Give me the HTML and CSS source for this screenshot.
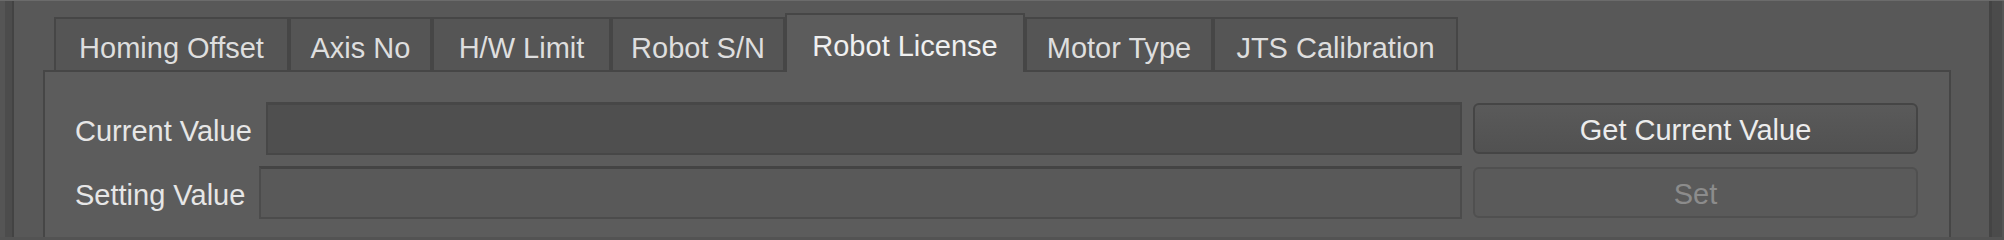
FILE: index.html
```html
<!DOCTYPE html>
<html>
<head>
<meta charset="utf-8">
<link rel="stylesheet" href="styles.css">
</head>
<body>
<div class="frame">
  <div class="side-left"></div>
  <div class="main">
    <div class="tabs">
      <div class="tab t-homing">Homing Offset</div>
      <div class="tab t-axis">Axis No</div>
      <div class="tab t-hw">H/W Limit</div>
      <div class="tab t-sn">Robot S/N</div>
      <div class="tab tab-active t-license">Robot License</div>
      <div class="tab t-motor">Motor Type</div>
      <div class="tab t-jts">JTS Calibration</div>
    </div>
    <div class="panel">
      <div class="row">
        <div class="label">Current Value</div>
        <div class="input input-readonly"></div>
        <div class="btn">Get Current Value</div>
      </div>
      <div class="row">
        <div class="label">Setting Value</div>
        <div class="input input-edit"></div>
        <div class="btn btn-disabled">Set</div>
      </div>
    </div>
  </div>
  <div class="side-right"></div>
</div>
<div class="bottom-strip"></div>
</body>
</html>
```
FILE: styles.css
```css
* { box-sizing: border-box; }
html, body { margin: 0; padding: 0; }
body {
  width: 2004px;
  height: 240px;
  overflow: hidden;
  background: #585858;
  border-top: 1px solid #6b6b6b;
  font-family: "Liberation Sans", Arial, sans-serif;
  font-size: 29px;
  color: #e4e4e4;
}
.frame {
  display: flex;
  height: 236px;
}
.side-left {
  width: 14px;
  flex: none;
  background: #4c4c4c;
  border-left: 5px solid #555555;
  border-right: 2px solid #434343;
}
.side-right {
  width: 15px;
  flex: none;
  background: #4b4b4b;
  border-left: 3px solid #444444;
  border-right: 2px solid #555555;
}
.main {
  flex: 1;
  display: flex;
  flex-direction: column;
  padding: 12px 38px 0 29px;
}
.tabs {
  display: flex;
  align-items: flex-end;
  height: 57px;
  padding-left: 11px;
}
.tab {
  height: 53px;
  background: #555555;
  border: 2px solid #464646;
  border-bottom: none;
  padding-top: 13px;
  text-align: center;
  line-height: 33px;
  white-space: nowrap;
  color: #dedede;
}
.tab-active {
  position: relative;
  z-index: 1;
  height: 59px;
  margin-bottom: -2px;
  padding-top: 15px;
  background: #5c5c5c;
  color: #f0f0f0;
}
.t-homing { width: 235px; }
.t-axis { width: 143px; }
.t-hw { width: 179px; }
.t-sn { width: 174px; }
.t-license { width: 240px; }
.t-motor { width: 188px; }
.t-jts { width: 245px; }
.panel {
  flex: 1;
  background: #5c5c5c;
  border: 2px solid #464646;
  border-bottom: none;
  padding: 30px 31px 0 30px;
  display: flex;
  flex-direction: column;
  gap: 11px;
}
.row {
  display: flex;
  align-items: center;
  height: 53px;
}
.label {
  flex: none;
  white-space: nowrap;
  margin-right: 14px;
  padding-top: 5px;
  color: #e6e6e6;
}
.input {
  flex: 1;
  height: 53px;
  margin-right: 11px;
}
.input-readonly {
  background: #4f4f4f;
  border: 2px solid #474747;
  border-top-width: 3px;
}
.input-edit {
  background: #595959;
  border: 2px solid #4c4c4c;
  border-top: 3px solid #444444;
}
.btn {
  flex: none;
  width: 445px;
  height: 51px;
  border: 2px solid #454545;
  border-radius: 6px;
  background: linear-gradient(#5a5a5a, #515151);
  display: flex;
  align-items: center;
  justify-content: center;
  padding-top: 4px;
  color: #ececec;
}
.btn-disabled {
  background: #5a5a5a;
  border-color: #505050;
  color: #8c8c8c;
}
.bottom-strip {
  height: 3px;
  background: #535353;
}
```
